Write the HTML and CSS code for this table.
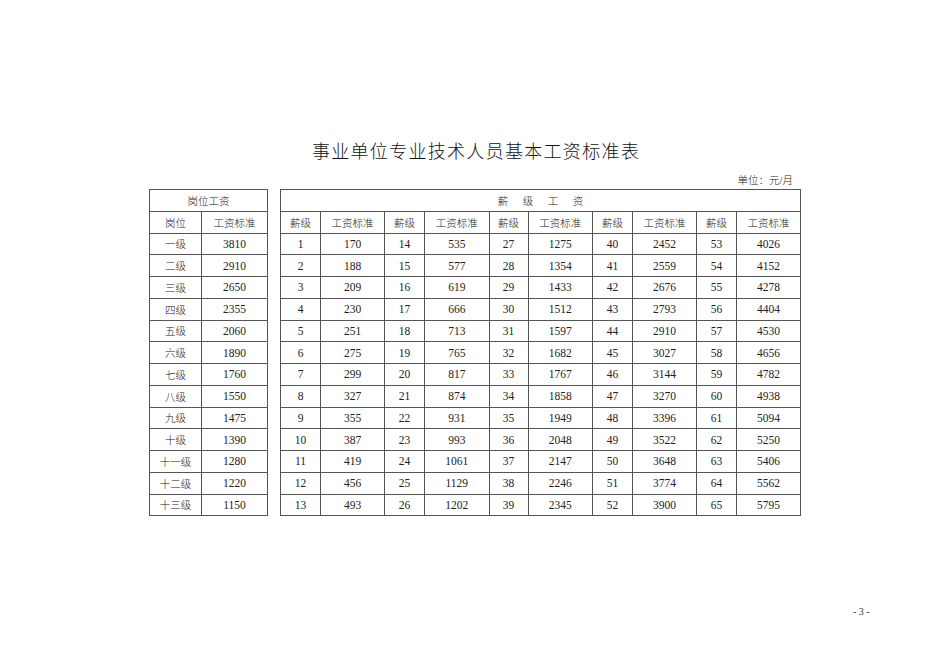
FILE: index.html
```html
<!DOCTYPE html>
<html lang="zh-CN">
<head>
<meta charset="utf-8">
<title>事业单位专业技术人员基本工资标准表</title>
<link rel="stylesheet" href="styles.css">
</head>
<body>
<div class="page">
  <h1 class="title">事业单位专业技术人员基本工资标准表</h1>
  <div class="unit">单位：元/月</div>
  <div class="tables">
    <table class="grid left">
      <colgroup><col class="c-post"><col class="c-std"></colgroup>
      <tr><td colspan="2" class="cn">岗位工资</td></tr>
      <tr><td class="cn">岗位</td><td class="cn">工资标准</td></tr>
      <tr><td class="cn">一级</td><td>3810</td></tr>
      <tr><td class="cn">二级</td><td>2910</td></tr>
      <tr><td class="cn">三级</td><td>2650</td></tr>
      <tr><td class="cn">四级</td><td>2355</td></tr>
      <tr><td class="cn">五级</td><td>2060</td></tr>
      <tr><td class="cn">六级</td><td>1890</td></tr>
      <tr><td class="cn">七级</td><td>1760</td></tr>
      <tr><td class="cn">八级</td><td>1550</td></tr>
      <tr><td class="cn">九级</td><td>1475</td></tr>
      <tr><td class="cn">十级</td><td>1390</td></tr>
      <tr><td class="cn">十一级</td><td>1280</td></tr>
      <tr><td class="cn">十二级</td><td>1220</td></tr>
      <tr><td class="cn">十三级</td><td>1150</td></tr>
    </table>
    <table class="grid right">
      <colgroup>
        <col class="c-lv"><col class="c-amt"><col class="c-lv"><col class="c-amt2"><col class="c-lv2"><col class="c-amt2"><col class="c-lv"><col class="c-amt"><col class="c-lv"><col class="c-amt">
      </colgroup>
      <tr><td colspan="10" class="cn spaced">薪级工资</td></tr>
      <tr><td class="cn">薪级</td><td class="cn">工资标准</td><td class="cn">薪级</td><td class="cn">工资标准</td><td class="cn">薪级</td><td class="cn">工资标准</td><td class="cn">薪级</td><td class="cn">工资标准</td><td class="cn">薪级</td><td class="cn">工资标准</td></tr>
      <tr><td>1</td><td>170</td><td>14</td><td>535</td><td>27</td><td>1275</td><td>40</td><td>2452</td><td>53</td><td>4026</td></tr>
      <tr><td>2</td><td>188</td><td>15</td><td>577</td><td>28</td><td>1354</td><td>41</td><td>2559</td><td>54</td><td>4152</td></tr>
      <tr><td>3</td><td>209</td><td>16</td><td>619</td><td>29</td><td>1433</td><td>42</td><td>2676</td><td>55</td><td>4278</td></tr>
      <tr><td>4</td><td>230</td><td>17</td><td>666</td><td>30</td><td>1512</td><td>43</td><td>2793</td><td>56</td><td>4404</td></tr>
      <tr><td>5</td><td>251</td><td>18</td><td>713</td><td>31</td><td>1597</td><td>44</td><td>2910</td><td>57</td><td>4530</td></tr>
      <tr><td>6</td><td>275</td><td>19</td><td>765</td><td>32</td><td>1682</td><td>45</td><td>3027</td><td>58</td><td>4656</td></tr>
      <tr><td>7</td><td>299</td><td>20</td><td>817</td><td>33</td><td>1767</td><td>46</td><td>3144</td><td>59</td><td>4782</td></tr>
      <tr><td>8</td><td>327</td><td>21</td><td>874</td><td>34</td><td>1858</td><td>47</td><td>3270</td><td>60</td><td>4938</td></tr>
      <tr><td>9</td><td>355</td><td>22</td><td>931</td><td>35</td><td>1949</td><td>48</td><td>3396</td><td>61</td><td>5094</td></tr>
      <tr><td>10</td><td>387</td><td>23</td><td>993</td><td>36</td><td>2048</td><td>49</td><td>3522</td><td>62</td><td>5250</td></tr>
      <tr><td>11</td><td>419</td><td>24</td><td>1061</td><td>37</td><td>2147</td><td>50</td><td>3648</td><td>63</td><td>5406</td></tr>
      <tr><td>12</td><td>456</td><td>25</td><td>1129</td><td>38</td><td>2246</td><td>51</td><td>3774</td><td>64</td><td>5562</td></tr>
      <tr><td>13</td><td>493</td><td>26</td><td>1202</td><td>39</td><td>2345</td><td>52</td><td>3900</td><td>65</td><td>5795</td></tr>
    </table>
  </div>
  <div class="pageno">- 3 -</div>
</div>
</body>
</html>
```
FILE: styles.css
```css
html, body {
  margin: 0;
  padding: 0;
  background: #fff;
}
body {
  width: 950px;
  height: 672px;
  overflow: hidden;
  font-family: "Liberation Serif", "Noto Sans CJK SC", serif;
  color: #111;
}
.page {
  padding-top: 139px;
  display: flex;
  flex-direction: column;
}
.title {
  margin: 0;
  font-family: "Noto Sans CJK SC", sans-serif;
  font-weight: 300;
  font-size: 18px;
  line-height: 22px;
  letter-spacing: 1.3px;
  padding-left: 2px;
  text-align: center;
  color: #111;
}
.unit {
  margin-top: 14px;
  align-self: flex-end;
  margin-right: 157px;
  font-family: "Liberation Serif", "Noto Sans CJK SC", sans-serif;
  font-weight: 300;
  font-size: 10.5px;
  line-height: 12px;
  color: #222;
}
.tables {
  margin-top: 2px;
  padding-left: 149px;
  display: flex;
  gap: 12px;
  align-items: flex-start;
}
.grid {
  border-collapse: collapse;
  table-layout: fixed;
  border: 1px solid #444;
}
.grid td {
  border: 1px solid #555;
  height: 20.75px;
  padding: 0;
  text-align: center;
  vertical-align: middle;
  font-family: "Liberation Serif", "Noto Sans CJK SC", serif;
  font-size: 11.5px;
  color: #222;
}
.grid td.cn {
  font-family: "Noto Sans CJK SC", sans-serif;
  font-weight: 300;
  font-size: 10.5px;
  color: #222;
}
.grid td.spaced {
  letter-spacing: 14.5px;
  padding-left: 14.5px;
}
.left { width: 118px; }
.c-post { width: 52px; }
.c-std { width: 66px; }
.right { width: 521px; }
.c-lv { width: 40px; }
.c-lv2 { width: 39px; }
.c-amt { width: 64px; }
.c-amt2 { width: 64.5px; }
.pageno {
  position: absolute;
  left: 853px;
  top: 606px;
  font-family: "Liberation Serif", serif;
  font-size: 10px;
  color: #333;
}
```
